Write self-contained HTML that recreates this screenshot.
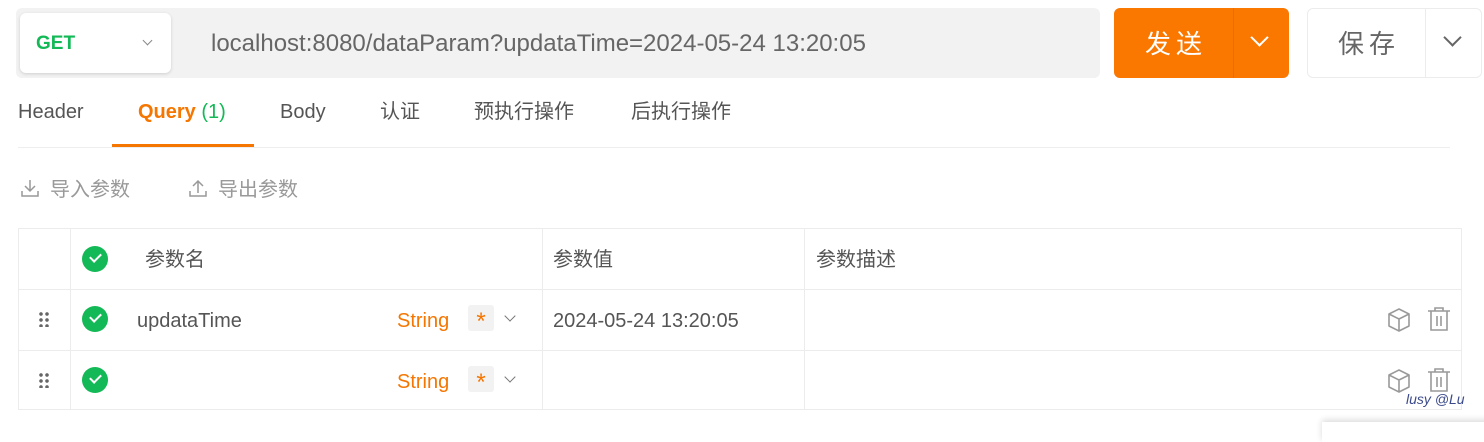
<!DOCTYPE html>
<html><head><meta charset="utf-8"><style>
*{margin:0;padding:0;box-sizing:border-box}
body{width:1484px;height:429px;background:#fff;position:relative;overflow:hidden;font-family:"Liberation Sans","Noto Sans CJK SC",sans-serif;color:#555}
.a{position:absolute}
.t{font-size:20px;line-height:24px;white-space:nowrap}
.chk{position:absolute;width:26px;height:26px;border-radius:50%;background:#13b956}
.chk:after{content:"";position:absolute;left:8px;top:7px;width:9px;height:5px;border-left:2px solid #fff;border-bottom:2px solid #fff;transform:rotate(-45deg)}
.dots{position:absolute;width:12px;height:16px;background:radial-gradient(circle,#666 1.6px,transparent 2px) 0 0/6px 6px}
.star{position:absolute;width:26px;height:26px;background:#f2f2f2;border-radius:3px;color:#f57600;font-size:24px;text-align:center;line-height:34px}
.chev{position:absolute;width:8px;height:8px;border-right:1.5px solid #777;border-bottom:1.5px solid #777;transform:rotate(45deg)}
</style></head><body>
<div class="a" style="left:16px;top:8px;width:1084px;height:70px;background:#f2f2f2;border-radius:6px"></div>
<div class="a" style="left:20px;top:13px;width:151px;height:60px;background:#fff;border-radius:6px;box-shadow:0 1px 3px rgba(0,0,0,.15)"></div>
<div class="a t" style="left:36px;top:32px;color:#13b956;font-weight:bold;font-size:19px">GET</div>
<div class="chev" style="left:144px;top:37px;width:7px;height:7px;border-color:#888"></div>
<div class="a t" style="left:211px;top:30px;font-size:24px;color:#666;line-height:28px">localhost:8080/dataParam?updataTime=2024-05-24 13:20:05</div>
<div class="a" style="left:1114px;top:8px;width:175px;height:70px;background:#fa7700;border-radius:6px"></div>
<div class="a" style="left:1233px;top:8px;width:1px;height:70px;background:#e86e00"></div>
<div class="a t" style="left:1145px;top:29px;color:#fff;font-size:26px;line-height:30px;letter-spacing:5px">发送</div>
<div class="a" style="left:1253px;top:31px;width:13px;height:13px;border-right:2px solid #fff;border-bottom:2px solid #fff;transform:rotate(45deg)"></div>
<div class="a" style="left:1307px;top:8px;width:175px;height:70px;background:#fff;border:1px solid #ececec;border-radius:6px"></div>
<div class="a" style="left:1425px;top:9px;width:1px;height:68px;background:#ececec"></div>
<div class="a t" style="left:1338px;top:29px;color:#666;font-size:26px;line-height:30px;letter-spacing:5px">保存</div>
<div class="a" style="left:1446px;top:31px;width:13px;height:13px;border-right:2px solid #666;border-bottom:2px solid #666;transform:rotate(45deg)"></div>

<div class="a t" style="left:18px;top:100px">Header</div>
<div class="a t" style="left:138px;top:100px;color:#f57600;font-weight:bold">Query <span style="color:#13b956;font-weight:normal">(1)</span></div>
<div class="a t" style="left:280px;top:100px">Body</div>
<div class="a t" style="left:380px;top:100px">认证</div>
<div class="a t" style="left:474px;top:100px">预执行操作</div>
<div class="a t" style="left:631px;top:100px">后执行操作</div>
<div class="a" style="left:18px;top:147px;width:1432px;height:1px;background:#eee"></div>
<div class="a" style="left:112px;top:144px;width:142px;height:3px;background:#f57600"></div>

<svg class="a" style="left:20px;top:178px" width="20" height="20" fill="none" stroke="#999" stroke-width="1.5"><path d="M10 2v11M5 8l5 5 5-5M2 13v5h16v-5"/></svg>
<div class="a t" style="left:50px;top:178px;color:#999">导入参数</div>
<svg class="a" style="left:188px;top:178px" width="20" height="20" fill="none" stroke="#999" stroke-width="1.5"><path d="M10 15V3M5 8l5-5 5 5M2 13v5h16v-5"/></svg>
<div class="a t" style="left:218px;top:178px;color:#999">导出参数</div>

<div class="a" style="left:18px;top:228px;width:1444px;height:182px;border:1px solid #ececec"></div>
<div class="a" style="left:18px;top:289px;width:1444px;height:1px;background:#ececec"></div>
<div class="a" style="left:18px;top:350px;width:1444px;height:1px;background:#ececec"></div>
<div class="a" style="left:70px;top:228px;width:1px;height:182px;background:#ececec"></div>
<div class="a" style="left:542px;top:228px;width:1px;height:182px;background:#ececec"></div>
<div class="a" style="left:804px;top:228px;width:1px;height:182px;background:#ececec"></div>

<div class="chk" style="left:82px;top:246px"></div>
<div class="a t" style="left:145px;top:248px">参数名</div>
<div class="a t" style="left:553px;top:248px">参数值</div>
<div class="a t" style="left:816px;top:248px">参数描述</div>

<div class="dots" style="left:38px;top:311px"></div>
<div class="chk" style="left:82px;top:306px"></div>
<div class="a t" style="left:137px;top:309px">updataTime</div>
<div class="a t" style="left:397px;top:309px;color:#f57600">String</div>
<div class="star" style="left:468px;top:305px">*</div>
<div class="chev" style="left:506px;top:312px"></div>
<div class="a t" style="left:553px;top:309px">2024-05-24 13:20:05</div>

<div class="dots" style="left:38px;top:372px"></div>
<div class="chk" style="left:82px;top:367px"></div>
<div class="a t" style="left:397px;top:370px;color:#f57600">String</div>
<div class="star" style="left:468px;top:366px">*</div>
<div class="chev" style="left:506px;top:373px"></div>

<svg class="a" style="left:1386px;top:307px" width="26" height="26" fill="none" stroke="#999" stroke-width="1.6" stroke-linejoin="round"><path d="M13 2l10 5v12l-10 5-10-5V7zM3 7l10 5 10-5M13 12v12"/></svg>
<svg class="a" style="left:1426px;top:306px" width="26" height="26" fill="none" stroke="#999" stroke-width="1.6"><path d="M2 5h22M9 5V2h8v3M5 5v19h16V5M11 10v10M15 10v10"/></svg>
<svg class="a" style="left:1386px;top:368px" width="26" height="26" fill="none" stroke="#999" stroke-width="1.6" stroke-linejoin="round"><path d="M13 2l10 5v12l-10 5-10-5V7zM3 7l10 5 10-5M13 12v12"/></svg>
<svg class="a" style="left:1426px;top:367px" width="26" height="26" fill="none" stroke="#999" stroke-width="1.6"><path d="M2 5h22M9 5V2h8v3M5 5v19h16V5M11 10v10M15 10v10"/></svg>
<div class="a" style="left:1406px;top:391px;font-size:14px;color:#3b4a8a;font-style:italic">lusy @Lu</div>
<div class="a" style="left:1322px;top:422px;width:170px;height:20px;background:#fff;box-shadow:0 -2px 6px rgba(0,0,0,.15)"></div>
</body></html>
